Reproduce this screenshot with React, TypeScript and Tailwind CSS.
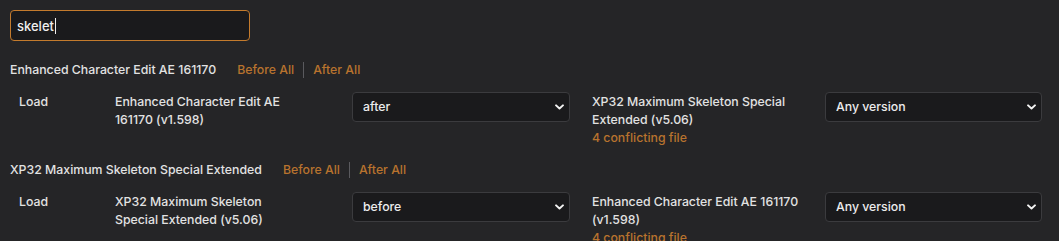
import React from 'react';

type Rule = {
  id: string;
  title: string;
  name: string;
  order: string;
  other: string;
};

const rules: Rule[] = [
  {
    id: 'eceae',
    title: 'Enhanced Character Edit AE 161170',
    name: 'Enhanced Character Edit AE 161170 (v1.598)',
    order: 'after',
    other: 'XP32 Maximum Skeleton Special Extended (v5.06)',
  },
  {
    id: 'xp32',
    title: 'XP32 Maximum Skeleton Special Extended',
    name: 'XP32 Maximum Skeleton Special Extended (v5.06)',
    order: 'before',
    other: 'Enhanced Character Edit AE 161170 (v1.598)',
  },
];

const Chevron = () => (
  <svg
    viewBox="0 0 10 6"
    className="pointer-events-none absolute right-[6px] top-1/2 h-[6px] w-[9px] -translate-y-1/2"
  >
    <path d="M1.2 1.2L5 4.6l3.8-3.4" fill="none" stroke="#f4f4f4" strokeWidth="2.2" strokeLinecap="round" strokeLinejoin="round" />
  </svg>
);

const Select: React.FC<{ value: string; options: string[]; width: string }> = ({ value, options, width }) => (
  <div className={`relative h-[30px] ${width}`}>
    <select
      defaultValue={value}
      className="h-full w-full appearance-none rounded-[4px] border border-[#3b3b3e] bg-[#1a1a1c] pl-[10px] pr-8 text-[12.3px] font-medium text-[#ececec] outline-none"
    >
      {options.map((o) => (
        <option key={o} value={o}>
          {o}
        </option>
      ))}
    </select>
    <Chevron />
  </div>
);

export default function App() {
  return (
    <div
      className="min-h-screen bg-[#252527] px-[10px] pt-[10px] text-[12.3px] font-medium leading-[18px] text-[#e2e2e2]"
      style={{ fontFamily: 'Inter, "Noto Sans", sans-serif' }}
    >
      <div className="flex h-[31px] w-[240px] items-center rounded-[4px] border border-[#c47b2d] bg-[#1a1a1c] pl-[6px] text-[13px]">
        <span className="text-[#efefef]">skelet</span>
        <span className="ml-px h-[16px] w-px bg-[#efefef]" />
      </div>

      {rules.map((r, i) => (
        <div key={r.id} className={i === 0 ? 'mt-[20px]' : 'mt-[14px]'}>
          <div className="flex h-[18px] items-center">
            <span>{r.title}</span>
            <button className="ml-[21px] text-[#b8732e]">Before All</button>
            <span className="mx-[9px] h-[16px] w-px bg-[#5a5a5e]" />
            <button className="text-[#b8732e]">After All</button>
          </div>

          <div className="mt-[13px] grid grid-cols-[96px_237px_240px_233px_217px] pl-[9px]">
            <div className="pt-px">Load</div>
            <div className="w-[190px] pt-px">{r.name}</div>
            <div>
              <Select value={r.order} options={['before', 'after']} width="w-[218px]" />
            </div>
            <div className="w-[225px] pt-px">
              <div>{r.other}</div>
              <div className="text-[#b8732e]">4 conflicting file</div>
            </div>
            <div>
              <Select value="Any version" options={['Any version']} width="w-[217px]" />
            </div>
          </div>
        </div>
      ))}
    </div>
  );
}
